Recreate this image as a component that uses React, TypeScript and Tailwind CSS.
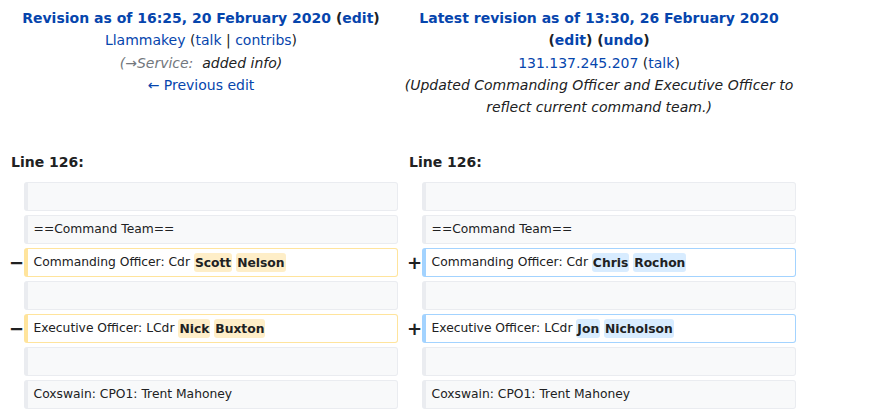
type Line =
  | { kind: "context"; text: string }
  | { kind: "change"; prefix: string; oldWords: string[]; newWords: string[] };

const lines: Line[] = [
  { kind: "context", text: "" },
  { kind: "context", text: "==Command Team==" },
  { kind: "change", prefix: "Commanding Officer: Cdr ", oldWords: ["Scott", "Nelson"], newWords: ["Chris", "Rochon"] },
  { kind: "context", text: "" },
  { kind: "change", prefix: "Executive Officer: LCdr ", oldWords: ["Nick", "Buxton"], newWords: ["Jon", "Nicholson"] },
  { kind: "context", text: "" },
  { kind: "context", text: "Coxswain: CPO1: Trent Mahoney" },
];

const link = "text-[#0645ad]";

const Box = ({ tone, children }: { tone: "context" | "del" | "add"; children?: React.ReactNode }) => {
  const cls =
    tone === "context"
      ? "bg-[#f8f9fa] border-[#eaecf0]"
      : tone === "del"
        ? "bg-white border-[#ffe49c]"
        : "bg-white border-[#a3d3ff]";
  return (
    <div
      className={`${cls} border border-solid border-l-4 rounded-[3px] pl-[6px] pr-[6px] py-[4px] leading-[19px] h-[29px] text-[12.3px] text-[#202122] whitespace-pre overflow-hidden`}
    >
      {children}
    </div>
  );
};

const Words = ({ words, bg }: { words: string[]; bg: string }) => (
  <>
    {words.map((w, i) => (
      <span key={i}>
        {i > 0 && " "}
        <span className={`font-bold rounded-[3px] px-[1px] py-[2.5px] ${bg}`}>{w}</span>
      </span>
    ))}
  </>
);

const Marker = ({ sign }: { sign: string }) => (
  <td className="p-0 align-middle">
    <div className="font-bold text-[18px] leading-[20px] pl-[5px] whitespace-nowrap">{sign}</div>
  </td>
);

const App = () => {
  return (
    <div className="bg-white w-[874px] h-[413px] overflow-hidden font-['DejaVu_Sans',sans-serif] text-[#202122]">
      <table className="w-[800px] table-fixed border-separate border-spacing-1">
        <colgroup>
          <col className="w-[2%]" />
          <col className="w-[48%]" />
          <col className="w-[2%]" />
          <col className="w-[48%]" />
        </colgroup>
        <tbody>
          <tr className="align-top">
            <td colSpan={2} className="text-center text-[14px] leading-[22.3px] pt-[3px]">
              <div className="font-bold">
                <a className={link}>Revision as of 16:25, 20 February 2020</a> (<a className={link}>edit</a>)
              </div>
              <div>
                <a className={link}>Llammakey</a> (<a className={link}>talk</a> | <a className={link}>contribs</a>)
              </div>
              <div className="italic whitespace-pre">
                <span className="text-[#72777d]">(→Service: </span>
                <span className="text-[#202122]"> added info)</span>
              </div>
              <div>
                <a className={link}>← Previous edit</a>
              </div>
            </td>
            <td colSpan={2} className="text-center text-[14px] leading-[22.3px] pt-[3px]">
              <div className="font-bold">
                <a className={link}>Latest revision as of 13:30, 26 February 2020</a>
              </div>
              <div className="font-bold">
                (<a className={link}>edit</a>) (<a className={link}>undo</a>)
              </div>
              <div>
                <a className={link}>131.137.245.207</a> (<a className={link}>talk</a>)
              </div>
              <div className="italic">
                (Updated Commanding Officer and Executive Officer to reflect current command team.)
              </div>
            </td>
          </tr>
          <tr>
            <td colSpan={4} className="h-[26px]"></td>
          </tr>
          <tr>
            <td colSpan={2} className="font-bold text-[14px] leading-[20px] pl-[7px] pb-[6px]">
              Line 126:
            </td>
            <td colSpan={2} className="font-bold text-[14px] leading-[20px] pl-[7px] pb-[6px]">
              Line 126:
            </td>
          </tr>
          {lines.map((line, i) =>
            line.kind === "context" ? (
              <tr key={i}>
                <td className="p-0"></td>
                <td className="p-0">
                  <Box tone="context">{line.text}</Box>
                </td>
                <td className="p-0"></td>
                <td className="p-0">
                  <Box tone="context">{line.text}</Box>
                </td>
              </tr>
            ) : (
              <tr key={i}>
                <Marker sign="−" />
                <td className="p-0">
                  <Box tone="del">
                    {line.prefix}
                    <Words words={line.oldWords} bg="bg-[#feeec8]" />
                  </Box>
                </td>
                <Marker sign="+" />
                <td className="p-0">
                  <Box tone="add">
                    {line.prefix}
                    <Words words={line.newWords} bg="bg-[#d8ecff]" />
                  </Box>
                </td>
              </tr>
            )
          )}
        </tbody>
      </table>
    </div>
  );
};

export default App;
